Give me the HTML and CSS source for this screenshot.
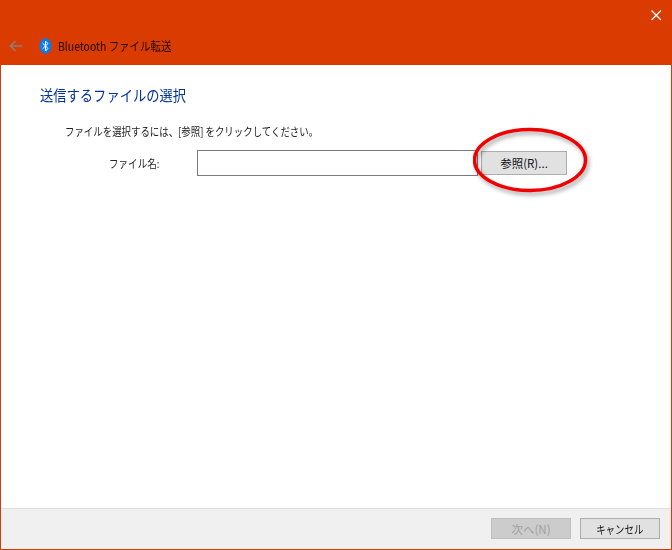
FILE: index.html
```html
<!DOCTYPE html>
<html lang="ja">
<head>
<meta charset="utf-8">
<title>Bluetooth ファイル転送</title>
<link rel="stylesheet" href="styles.css">
</head>
<body>
<div class="window">
  <header class="titlebar">
    <div class="close-row">
      <svg class="close" width="12" height="12" viewBox="0 0 12 12"><path d="M1.500 1.500L11 11M11 1.500L1.500 11" stroke="#fff" stroke-width="1.300" fill="none"/></svg>
    </div>
    <div class="nav-row">
      <svg class="back" width="14" height="12" viewBox="0 0 14 12"><path d="M13.500 6H1.500M6.500 1L1.500 6L6.500 11" stroke="#8d7f78" stroke-width="1.600" fill="none"/></svg>
      <svg class="bt" width="13" height="16" viewBox="0 0 13 16"><ellipse cx="6.500" cy="8" rx="6" ry="7.800" fill="#0a7bea"/><path d="M3.600 5.200L9 10.400L6.500 13V3L9 5.600L3.600 10.800" stroke="#fff" stroke-width="1" fill="none"/></svg>
      <span class="app-title">Bluetooth ファイル転送</span>
    </div>
  </header>
  <main class="content">
    <h1 class="heading">送信するファイルの選択</h1>
    <p class="hint"><span class="hint-text">ファイルを選択するには、[参照] をクリックしてください。</span></p>
    <div class="file-row">
      <label class="file-label"><span class="label-text">ファイル名:</span></label>
      <input class="file-input" type="text">
      <button class="btn browse">参照(R)...</button>
    </div>
  </main>
  <footer class="footer">
    <button class="btn next" disabled>次へ(N)</button>
    <button class="btn cancel"><span class="cancel-text">キャンセル</span></button>
  </footer>
  <svg class="circle" width="130" height="80" viewBox="0 0 130 80">
    <ellipse class="circle-line" cx="57" cy="33" rx="55.500" ry="30.500"/>
  </svg>
</div>
</body>
</html>
```
FILE: styles.css
```css
* { box-sizing: border-box; }
html, body { margin: 0; padding: 0; }
body { width: 672px; height: 550px; overflow: hidden; font-family: "Noto Sans CJK JP", "Noto Sans", sans-serif; font-size: 12px; color: #222; }
.window { position: relative; width: 672px; height: 550px; display: flex; flex-direction: column; background: #fff; border: 1px solid #da3b01; border-top: 0; }
.titlebar { height: 65px; flex: none; background: #da3b01; display: flex; flex-direction: column; }
.close-row { height: 30px; display: flex; justify-content: flex-end; align-items: flex-start; padding: 9px 9px 0 0; }
.nav-row { height: 35px; display: flex; align-items: center; padding: 0 0 4px 8px; }
.back { margin-right: 16px; }
.bt { margin-right: 6px; }
.app-title { display: inline-block; color: #1a0a02; font-size: 12px; line-height: 16px; white-space: nowrap; transform: scaleX(0.87); transform-origin: left center; }
.content { flex: 1; padding: 20px 0 0 39px; }
.heading { margin: 0; font-size: 15px; font-weight: 400; line-height: 20px; color: #003399; white-space: nowrap; transform: scaleX(0.885); transform-origin: left center; }
.hint { margin: 18px 0 0 25px; line-height: 16px; font-size: 11.500px; white-space: nowrap; }
.hint-text { display: inline-block; transform: scaleX(0.82); transform-origin: left center; }
.file-row { display: flex; align-items: flex-start; margin-top: 11px; }
.file-label { width: 157px; padding: 5px 0 0 69px; line-height: 16px; font-size: 11.500px; white-space: nowrap; }
.label-text { display: inline-block; transform: scaleX(0.83); transform-origin: left center; }
.file-input { width: 281px; height: 26px; margin: 0; border: 1px solid #7a7a7a; background: #fff; outline: 0; }
.btn { height: 21px; padding: 0; font: inherit; font-size: 11.500px; line-height: 16px; color: #111; background: #e1e1e1; border: 1px solid #adadad; }
.browse { width: 86px; height: 24px; margin-top: 1px; margin-left: 3px; }
.footer { height: 41px; flex: none; background: #f0f0f0; border-top: 1px solid #dfdfdf; display: flex; justify-content: flex-end; align-items: flex-start; gap: 9px; padding: 9px 11px 0 0; }
.next { width: 80px; color: #a0a0a0; background: #cccccc; border-color: #bfbfbf; }
.cancel { width: 80px; }
.cancel-text { display: inline-block; transform: scaleX(0.82); }
.circle { position: absolute; left: 472px; top: 127px; }
.circle-line { fill: none; stroke: #f00000; stroke-width: 3.500px; filter: drop-shadow(2px 3px 2px rgba(0,0,0,0.35)); }
```
